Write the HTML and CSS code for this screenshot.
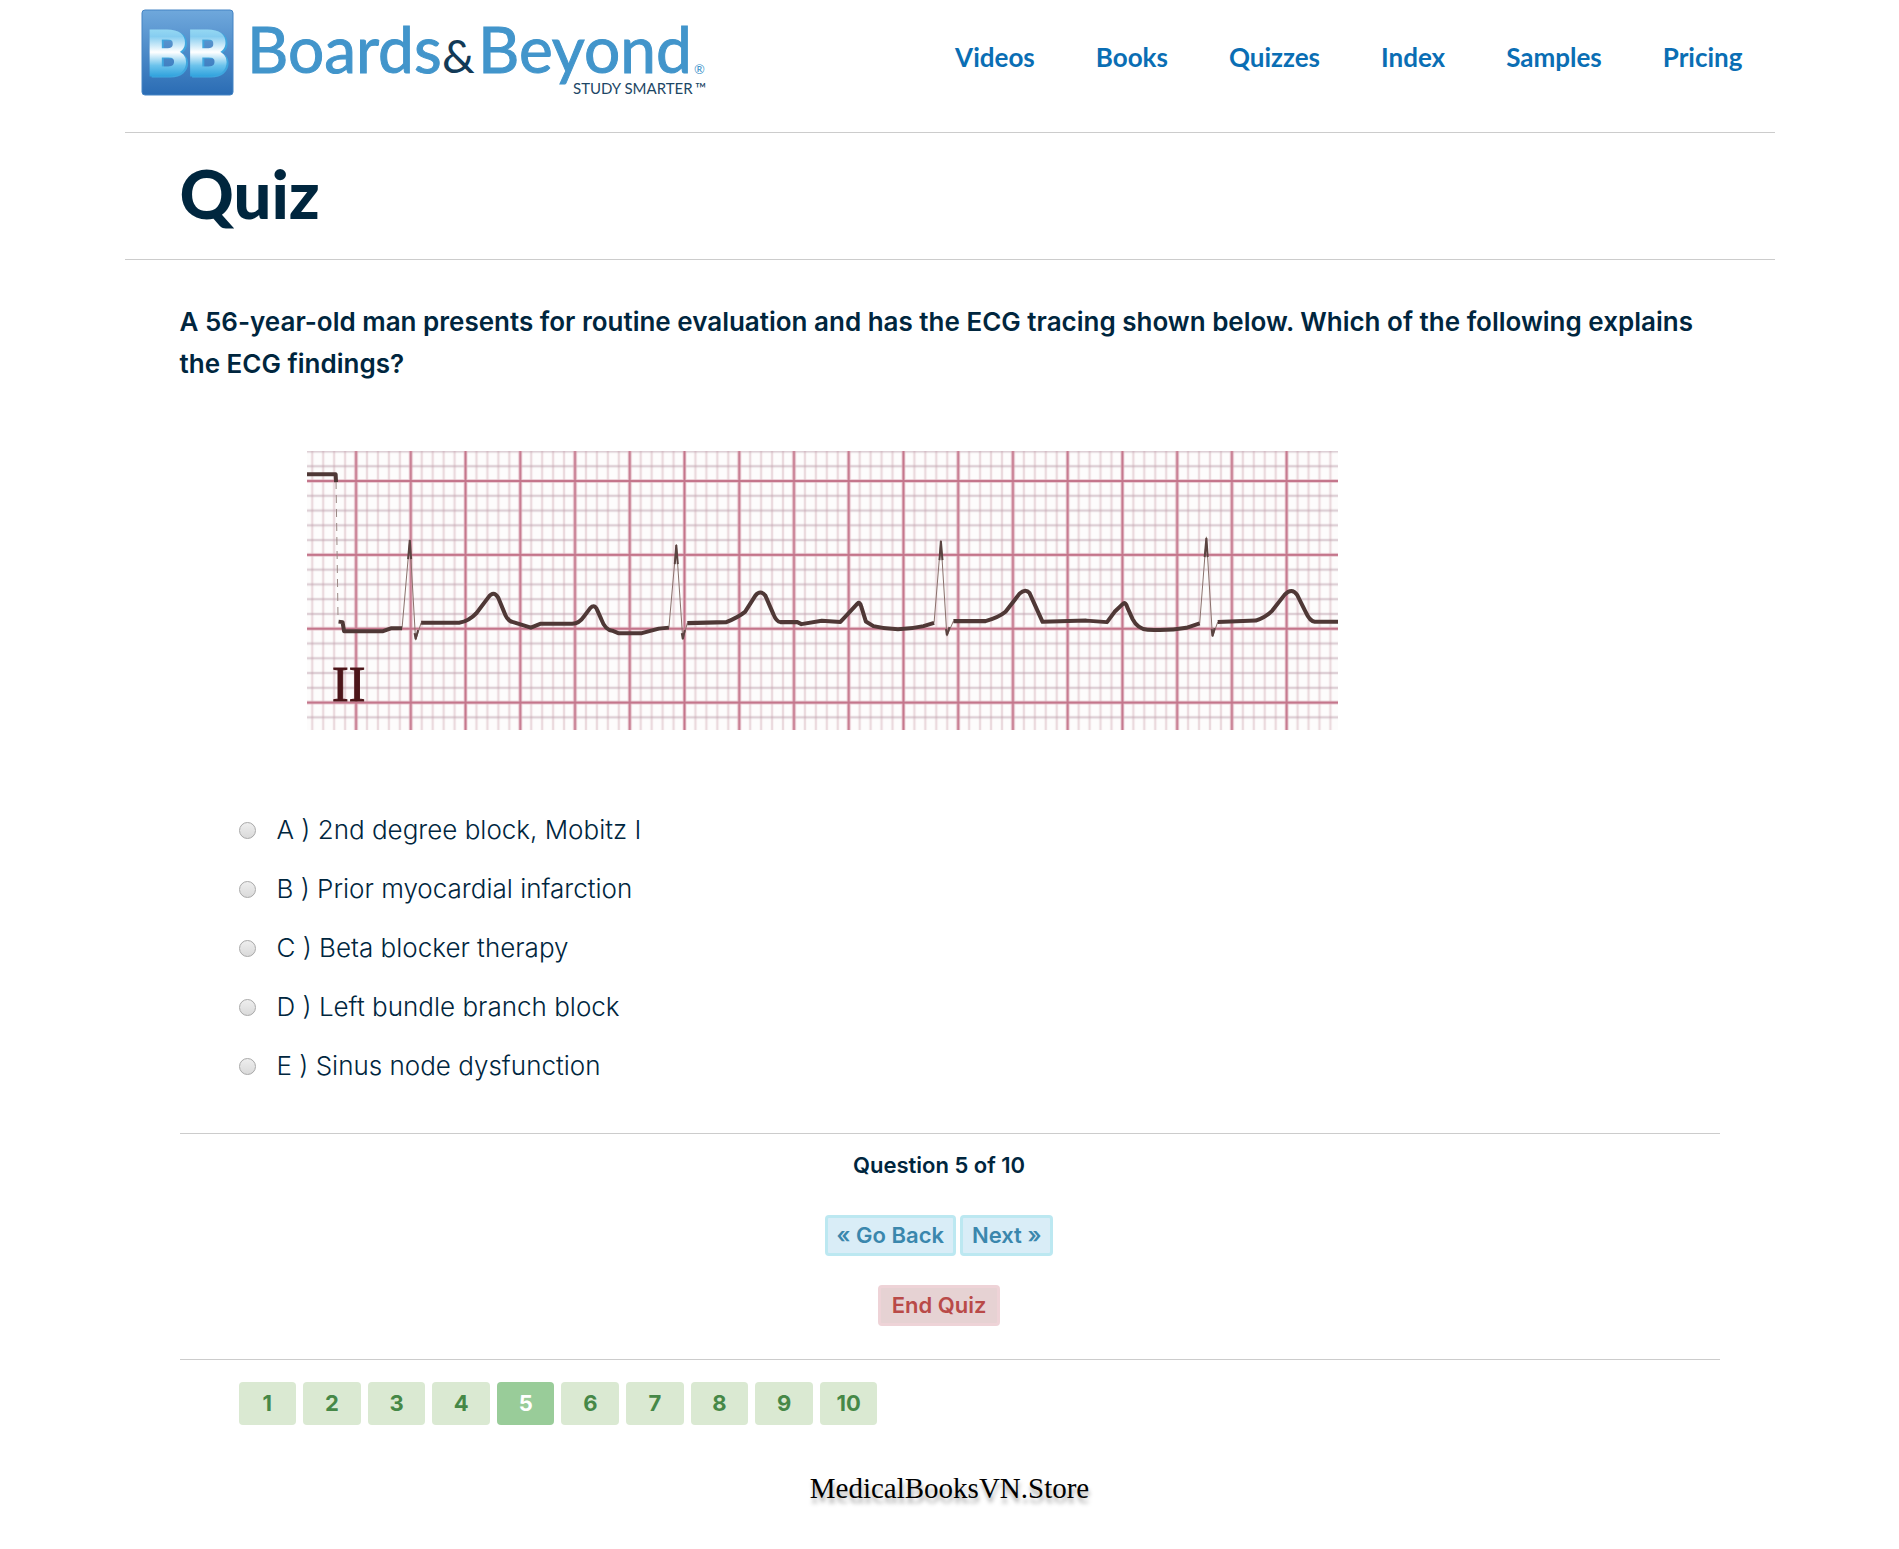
FILE: index.html
```html
<!DOCTYPE html>
<html lang="en">
<head>
<meta charset="utf-8">
<title>Quiz - Boards &amp; Beyond</title>
<meta name="viewport" content="width=device-width, initial-scale=1">
<link rel="stylesheet" href="styles.css">
</head>
<body>
<div class="page">
  <header class="site-header">
    <a class="brand" href="#" aria-label="Boards &amp; Beyond">
      <svg class="brand-art" viewBox="0 0 590 98" role="img" aria-label="Boards &amp; Beyond, Study Smarter">
        <defs>
          <linearGradient id="tile" x1="0" y1="0" x2="0" y2="1">
            <stop offset="0" stop-color="#6fa8dc"/>
            <stop offset="1" stop-color="#2a6cb4"/>
          </linearGradient>
          <linearGradient id="letters" gradientUnits="userSpaceOnUse" x1="0" y1="22" x2="0" y2="80">
            <stop offset="0" stop-color="#a4e2f5"/>
            <stop offset=".25" stop-color="#86cdf0"/>
            <stop offset=".52" stop-color="#ffffff"/>
            <stop offset=".75" stop-color="#6cc3ec"/>
            <stop offset="1" stop-color="#1c97d8"/>
          </linearGradient>
        </defs>
        <rect x="12" y="10" width="91" height="85" rx="3" fill="url(#tile)" stroke="#4584c4" stroke-width="1"/>
        <text class="mark" x="57" y="75" text-anchor="middle">BB</text>
        <text class="word" x="117" y="73">Boards</text>
        <text class="word amp" x="312" y="73">&amp;</text>
        <text class="word" x="348" y="73">Beyond</text>
        <text class="reg" x="564" y="74">®</text>
        <text class="tagline" x="443" y="94">STUDY SMARTER</text>
        <text class="tm" x="565" y="94">™</text>
      </svg>
    </a>
    <nav class="main-nav" aria-label="Main">
      <a href="#">Videos</a>
      <a href="#">Books</a>
      <a href="#">Quizzes</a>
      <a href="#">Index</a>
      <a href="#">Samples</a>
      <a href="#">Pricing</a>
    </nav>
  </header>

  <div class="title-bar"><h1>Quiz</h1></div>

  <main class="content">
    <form class="quiz">
      <fieldset class="question">
        <legend>A 56-year-old man presents for routine evaluation and has the ECG tracing shown below. Which of the following explains the ECG findings?</legend>
        <svg class="ecg" viewBox="0 0 1031 279" role="img" aria-label="ECG tracing, lead II">
          <defs>
            <pattern id="minor" x="49" y="30" width="10.94" height="14.76" patternUnits="userSpaceOnUse">
              <path d="M0 0V14.76M10.94 0V14.76" stroke="#d9b8bf" stroke-width="2.4" opacity=".5"/>
              <path d="M0 0H10.94M0 14.76H10.94" stroke="#c0a4b0" stroke-width="2.6" opacity=".5"/>
            </pattern>
            <pattern id="major" x="21.65" y="-6.9" width="54.7" height="73.8" patternUnits="userSpaceOnUse">
              <path d="M27.35 0V73.8M0 36.9H54.7" stroke="#e3b4c0" stroke-width="4" opacity=".5"/>
              <path d="M27.35 0V73.8M0 36.9H54.7" stroke="#c4758b" stroke-width="2"/>
            </pattern>
          </defs>
          <rect width="1031" height="279" fill="#fdfcfc"/>
          <rect width="1031" height="279" fill="url(#minor)"/>
          <rect width="1031" height="279" fill="url(#major)"/>
          <path class="drop" d="M29 30L31 169"/>
          <path class="spike" d="M95 176.500L102.700 88.500L108.500 189L114 171.700M361.600 176.500L369 93L375.500 188.500L380 172M626.600 171.700L633.400 89L639.400 185L645.900 170M892 172.300L898.700 85.700L904.800 185.700L910 171"/>
          <path class="spike-tip" d="M101 108L102.700 89L104 108M367.500 113L369 94L370.500 113M632 109L633.400 90L635 109M897 106L898.700 87L900 106M107.500 182L108.500 188L111 179M374.500 182L375.500 188L377.500 179M638.500 178L639.400 184L642 176M904 178L904.800 185L907 177"/>
          <path class="trace" d="M0 23.300H28.600L29 31M31.500 170.500L35.500 171L37 180H76L84.500 177H95M114 171.700H152Q162 170 169 162.300L181 146.500Q186.500 139 191 146.500L197 161Q200 170 206 171L223.700 176.500L233 172.700H265Q272 172.500 277 165L283 157Q287.500 152.500 290 159L294 168Q298 179 305 179.500L311 182H334.600L351.500 177.500L361.600 176.500M380 172L419 171Q431 166 437.700 160.700L448 144.500Q453 138.500 458 144.500L466 163Q469 170.500 473 171H490L494 173L514.400 169.700L533 170.800L541 162.300L550 152.500Q552.500 150 554 156L558.400 170.300L566 175Q590 181 616 175L626.600 171.700M645.900 170H678Q691 166.500 698 160.700L712 142.500Q718 137 722 142L735 170.700L778.700 169.500L799.400 171L807 160.700L815 153Q818 150 820 157L825 168Q830 178 840 178.500Q860 180 878.700 176.700L892 172.300M910 171L948 169.500Q958 166 964.400 159.700L977 143.500Q984 136 989.400 143.700L998 161Q1002 170 1007 170.700H1031"/>
          <text class="lead" x="25" y="250">II</text>
        </svg>
        <div class="answers">
          <label><input type="radio" name="answer" value="a">A ) 2nd degree block, Mobitz I</label>
          <label><input type="radio" name="answer" value="b">B ) Prior myocardial infarction</label>
          <label><input type="radio" name="answer" value="c">C ) Beta blocker therapy</label>
          <label><input type="radio" name="answer" value="d">D ) Left bundle branch block</label>
          <label><input type="radio" name="answer" value="e">E ) Sinus node dysfunction</label>
        </div>
      </fieldset>

      <div class="controls">
        <p class="progress">Question 5 of 10</p>
        <div class="steps">
          <button class="btn btn-info" type="button">« Go Back</button>
          <button class="btn btn-info" type="button">Next »</button>
        </div>
        <button class="btn btn-danger" type="button">End Quiz</button>
      </div>

      <div class="pager">
        <button type="button">1</button>
        <button type="button">2</button>
        <button type="button">3</button>
        <button type="button">4</button>
        <button class="current" type="button" aria-current="step">5</button>
        <button type="button">6</button>
        <button type="button">7</button>
        <button type="button">8</button>
        <button type="button">9</button>
        <button type="button">10</button>
      </div>
    </form>
  </main>

  <footer class="site-footer">MedicalBooksVN.Store</footer>
</div>
</body>
</html>
```
FILE: styles.css
```css
* {
  box-sizing: border-box;
}

body {
  margin: 0;
  background: #fff;
  color: #00263e;
  font-family: "Open Sans", "Noto Sans", sans-serif;
}

.page {
  max-width: 1650px;
  margin: 0 auto;
}

/* Header */

.site-header {
  display: flex;
  justify-content: space-between;
  align-items: flex-start;
  height: 133px;
  padding: 0 32px 0 5px;
  border-bottom: 1px solid #ccc;
}

.brand {
  display: block;
}

.brand-art {
  display: block;
  width: 590px;
  height: 98px;
}

.mark {
  font: 900 61px "Lato", sans-serif;
  fill: url(#letters);
  stroke: url(#letters);
  stroke-width: 3px;
  filter: drop-shadow(2px 1px 0 #3fa6de);
}

.word {
  font: 64px "Lato", sans-serif;
  fill: #4295cb;
  stroke: #4295cb;
}

.amp {
  font-size: 46px;
  fill: #123a57;
  stroke: none;
}

.reg {
  font: 13px "Lato", sans-serif;
  fill: #4295cb;
}

.tagline,
.tm {
  font: 15px "Lato", sans-serif;
  fill: #1d4766;
}

.main-nav {
  display: flex;
  gap: 61px;
  padding-top: 42px;
}

.main-nav a {
  color: #0a6eb4;
  font: bold 26px/30px "Lato", sans-serif;
  text-decoration: none;
}

.title-bar {
  height: 127px;
  padding: 22px 55px;
  border-bottom: 1px solid #ccc;
}

.title-bar h1 {
  margin: 0;
  font: 900 67px/76px "Lato", sans-serif;
}

/* Question */

.content {
  padding: 41px 55px 0;
}

.question {
  min-width: 0;
  margin: 0;
  padding: 0;
  border: 0;
}

.question legend {
  padding: 0;
  font: 600 26px/42px "Inter", sans-serif;
}

.ecg {
  display: block;
  width: 67%;
  margin: 66px 0 0 127px;
}

.ecg path {
  fill: none;
}

.trace {
  stroke: #4f3836;
  stroke-width: 4px;
  stroke-linejoin: round;
}

.spike {
  stroke: #8a716c;
  stroke-width: 1px;
}

.spike-tip {
  stroke: #5a4340;
  stroke-width: 2px;
}

.drop {
  stroke: #9a8884;
  stroke-width: 1px;
  stroke-dasharray: 8 6;
}

.lead {
  font: bold 50px "Liberation Serif", serif;
  font-weight: 400;
  fill: #4c1519;
  stroke: #4c1519;
}

.answers {
  display: flex;
  flex-direction: column;
  align-items: flex-start;
  gap: 17px;
  padding: 79px 0 46px 59px;
}

.answers label {
  display: flex;
  align-items: center;
  gap: 21px;
  font: 300 26px/42px "Inter", sans-serif;
}

.answers input {
  appearance: none;
  width: 17px;
  height: 17px;
  margin: 0;
  border: 1px solid #a8a8a8;
  border-radius: 50%;
  background: linear-gradient(#eee, #dadada);
}

.answers input:checked {
  background: radial-gradient(#444 35%, #ddd 40%);
}

/* Controls */

.controls {
  display: flex;
  flex-direction: column;
  align-items: center;
  padding: 16px 21px 33px 0;
  border: solid #ccc;
  border-width: 1px 0;
}

.progress {
  margin: 0 0 35px;
  font: 600 22px/30px "Inter", sans-serif;
}

.steps {
  display: flex;
  gap: 4px;
  margin-bottom: 29px;
}

.btn {
  height: 41px;
  padding: 0 11px 2px;
  border: 3px solid;
  border-radius: 4px;
  font: 600 22px/30px "Inter", sans-serif;
}

.btn-info {
  padding: 0 9px 2px;
  background: #d9edf7;
  border-color: #bce8f1;
  color: #3a87ad;
}

.btn-danger {
  background: #e6d2d3;
  border-color: #eed3d7;
  color: #b94a48;
}

.pager {
  display: grid;
  grid-template-columns: repeat(10, 1fr);
  gap: 7px;
  max-width: 698px;
  padding: 22px 0 0 59px;
}

.pager button {
  height: 43px;
  padding: 0 0 2px;
  border: 0;
  border-radius: 4px;
  background: #dae9d2;
  color: #468847;
  font: 700 22px/30px "Inter", sans-serif;
}

.pager .current {
  background: #99cc99;
  color: #fff;
}

.site-footer {
  padding: 46px 0;
  color: #000;
  font: 29px/34px "Liberation Serif", serif;
  text-align: center;
  text-shadow: 1px 5px 4px rgba(0, 0, 0, .35);
}
```
